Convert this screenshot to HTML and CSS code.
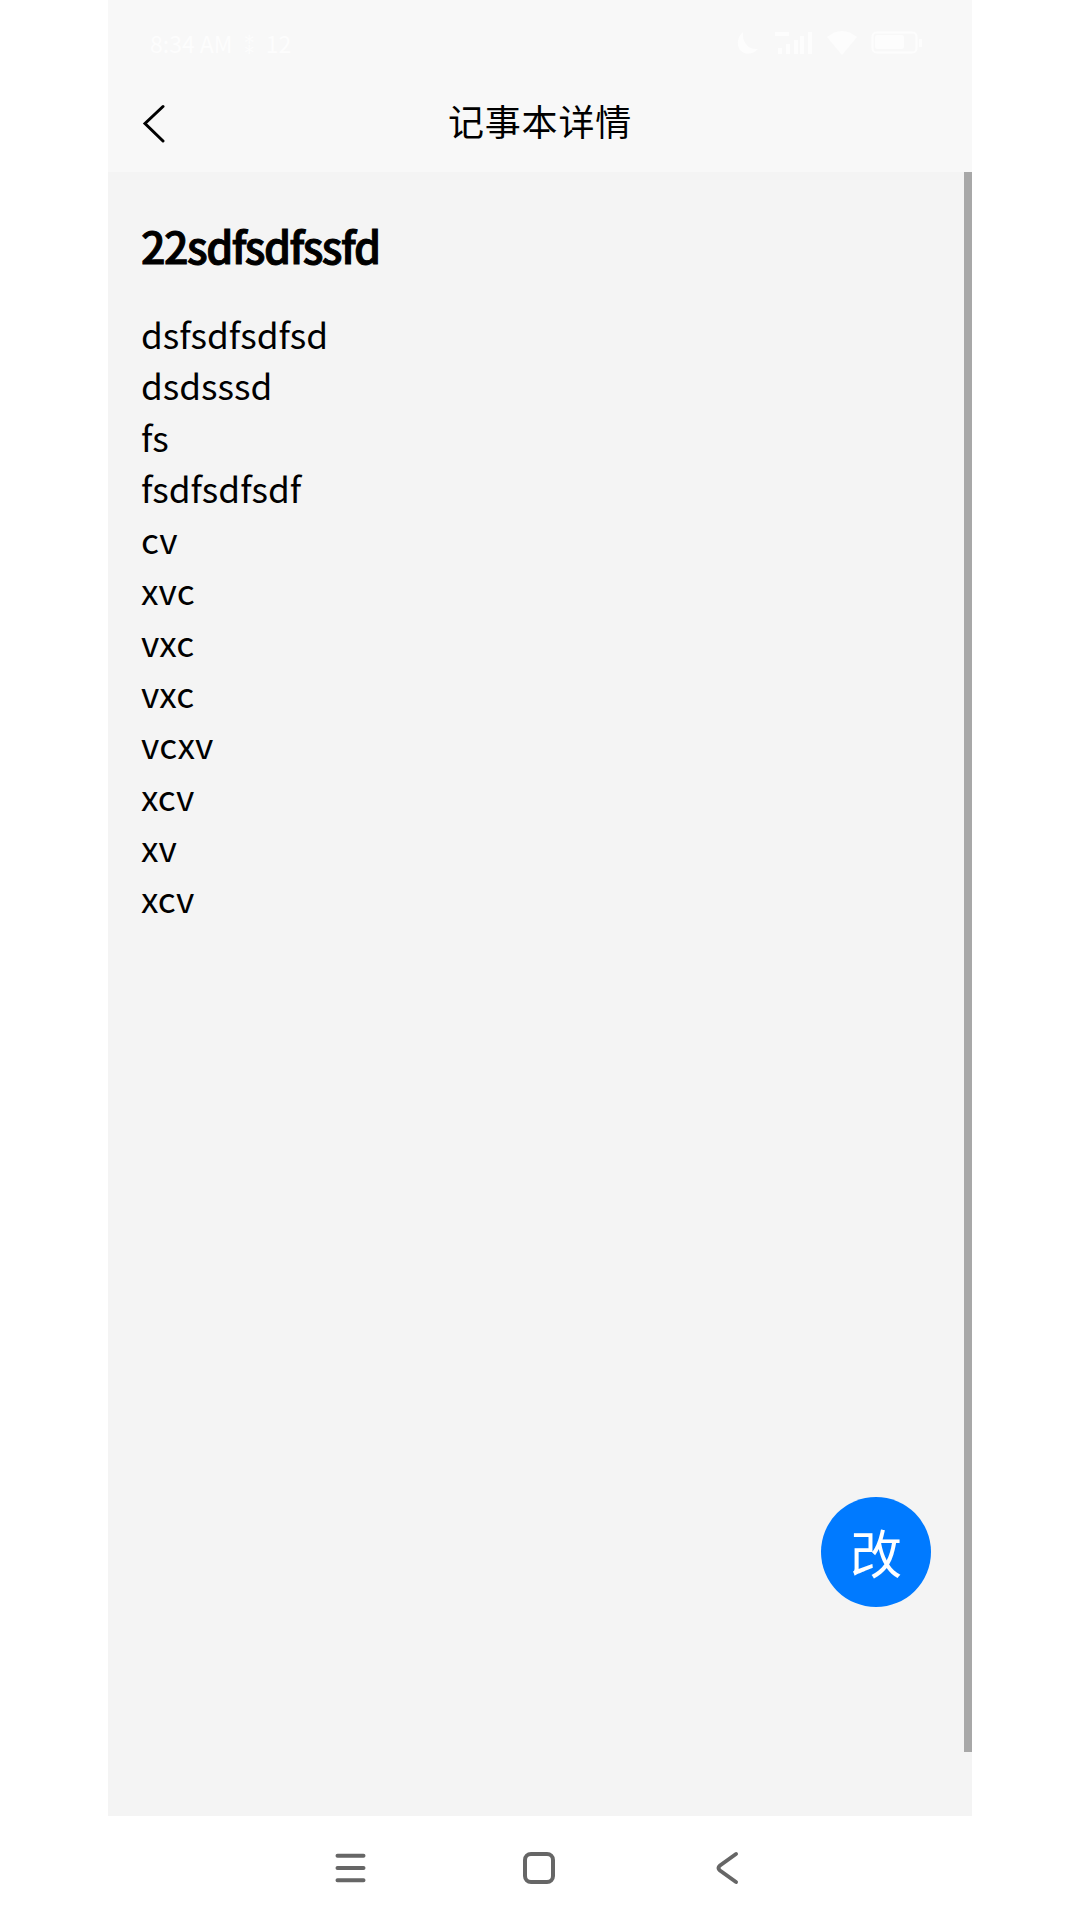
FILE: index.html
```html
<!DOCTYPE html>
<html lang="zh-CN">
<head>
  <meta charset="UTF-8">
  <meta name="viewport" content="width=device-width, initial-scale=1.0">
  <title>记事本详情</title>
  <link rel="stylesheet" href="styles.css">
</head>
<body>
  <div class="phone">
    <div class="status_bar">
      <span class="time">8:34 AM ⁑ 12</span>
      <div class="status_icons">
        <svg width="24" height="26" viewBox="0 0 24 26"><path d="M7 2C2 6 0 14 4 20c4 5 13 5 18-1C12 20 6 12 7 2z"/></svg>
        <svg width="40" height="26" viewBox="0 0 40 26"><path d="M2 2h14v4H2zM5 18h4v6H5zM13 14h4v10h-4zM21 10h4v14h-4zM27 6h4v18h-4zM35 2h4v22h-4z"/></svg>
        <svg width="32" height="26" viewBox="0 0 32 26"><path d="M1 7Q16-5 31 7L16 25z"/></svg>
        <svg class="battery" width="52" height="26" viewBox="0 0 52 26"><rect class="line" x="1.5" y="2.5" width="44" height="20" rx="4"/><rect x="4" y="5" width="29" height="14" rx="2"/><path d="M48 9h3v8h-3z"/></svg>
      </div>
    </div>
    <div class="header">
      <svg class="back" width="24" height="40" viewBox="0 0 24 40"><path d="M21 3.500L3 20.500L21 38"/></svg>
      <h1>记事本详情</h1>
    </div>
    <div class="content">
      <h2>22sdfsdfssfd</h2>
      <div class="note">
        <p>dsfsdfsdfsd</p>
        <p>dsdsssd</p>
        <p>fs</p>
        <p>fsdfsdfsdf</p>
        <p>cv</p>
        <p>xvc</p>
        <p>vxc</p>
        <p>vxc</p>
        <p>vcxv</p>
        <p>xcv</p>
        <p>xv</p>
        <p>xcv</p>
      </div>
      <div class="scrollbar"></div>
      <div class="edit_btn">改</div>
    </div>
    <div class="nav_bar">
      <svg width="34" height="34" viewBox="0 0 34 34"><path d="M4.500 4.700h26M4.500 17h26M4.500 29.300h26"/></svg>
      <svg width="34" height="34" viewBox="0 0 34 34"><rect x="3" y="3" width="28" height="28" rx="6"/></svg>
      <svg width="34" height="34" viewBox="0 0 34 34"><path d="M25 3L9 14.500Q6 17 9 19.500L25 31"/></svg>
    </div>
  </div>
</body>
</html>
```
FILE: styles.css
```css
* {
  margin: 0;
  padding: 0;
  box-sizing: border-box;
}
body {
  background-color: #fff;
  font-family: "Noto Sans CJK SC", sans-serif;
  color: #000;
}
svg {
  display: block;
}
.phone {
  width: 864px;
  height: 1920px;
  margin: 0 auto;
  display: flex;
  flex-direction: column;
}
.status_bar {
  height: 74px;
  padding: 12px 49px 0 42px;
  background-color: #f8f8f8;
  display: flex;
  align-items: center;
  justify-content: space-between;
}
.time {
  color: #fdfdfd;
  font-size: 23px;
  line-height: 36px;
}
.status_icons {
  display: flex;
  gap: 13px;
}
.status_icons svg {
  fill: #fdfdfd;
}
.status_icons .line {
  fill: none;
  stroke: #fdfdfd;
  stroke-width: 2;
}
.header {
  height: 98px;
  padding: 0 34px;
  background-color: #f8f8f8;
  display: grid;
  grid-template-columns: 24px 1fr 24px;
  align-items: center;
}
.back {
  fill: none;
  stroke: #000;
  stroke-width: 3;
  stroke-linecap: round;
}
.header h1 {
  padding-bottom: 7px;
  font-size: 36px;
  font-weight: 400;
  line-height: 50px;
  letter-spacing: .8px;
  text-align: center;
}
.content {
  position: relative;
  height: 1644px;
  padding: 42px 33px 0;
  background-color: #f4f4f4;
}
.content h2 {
  font-size: 43px;
  font-weight: 500;
  line-height: 62px;
  letter-spacing: -1.5px;
  -webkit-text-stroke: 1px #000;
}
.note {
  margin-top: 32px;
}
.note p {
  font-size: 35.2px;
  line-height: 51.3px;
}
.scrollbar {
  position: absolute;
  top: 0;
  right: 0;
  width: 8px;
  height: 1580px;
  background-color: #a8a8a8;
}
.edit_btn {
  position: absolute;
  right: 41px;
  bottom: 209px;
  width: 110px;
  height: 110px;
  border-radius: 50%;
  background-color: #007aff;
  color: #fff;
  font-size: 52px;
  line-height: 109px;
  text-align: center;
}
.nav_bar {
  height: 104px;
  padding-right: 2px;
  background-color: #fff;
  display: flex;
  align-items: center;
  justify-content: center;
  gap: 155px;
}
.nav_bar svg {
  fill: none;
  stroke: #666;
  stroke-width: 4;
  stroke-linecap: round;
}
```
